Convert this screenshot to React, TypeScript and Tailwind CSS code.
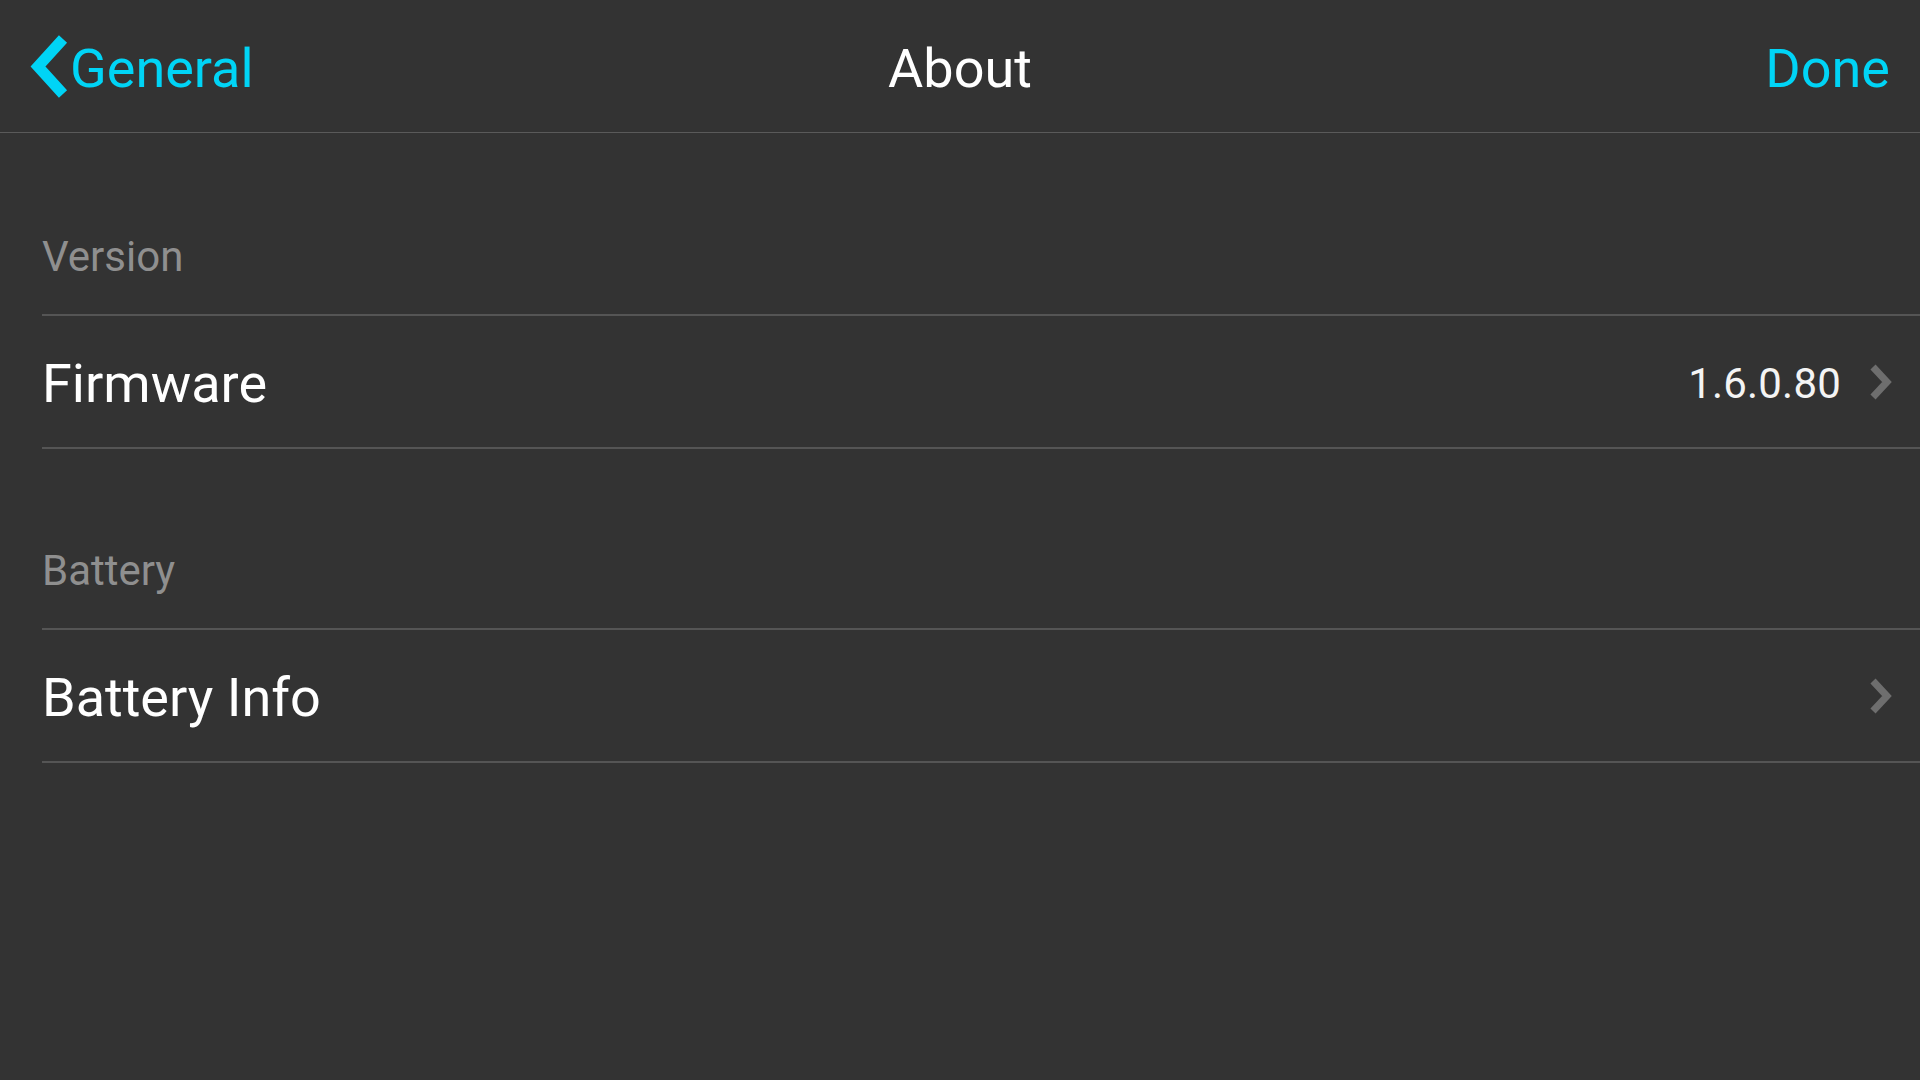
import React from 'react';

const CYAN = 'text-[#00d4f6]';

const BackChevron: React.FC = () => (
  <svg width="38" height="63" viewBox="0 0 38 63" className="overflow-visible shrink-0">
    <polyline points="33,4 8,31.5 33,59" fill="none" stroke="#00d4f6" strokeWidth="11" strokeLinejoin="miter" strokeMiterlimit="10" />
  </svg>
);

const RowChevron: React.FC = () => (
  <svg width="24" height="38" viewBox="0 0 24 38" className="overflow-visible shrink-0">
    <polyline points="4,4 18,19 4,34" fill="none" stroke="#6e6e6e" strokeWidth="7" strokeLinejoin="miter" strokeMiterlimit="10" />
  </svg>
);

interface SectionProps {
  title: string;
  height: string;
}

const SectionHeader: React.FC<SectionProps> = ({ title, height }) => (
  <div className={`ml-[42px] flex items-end border-b-2 border-[#555555] pb-[36px] ${height}`}>
    <span className="text-[42px] leading-none text-[#8f8f8f]">{title}</span>
  </div>
);

interface RowProps {
  label: string;
  value?: string;
}

const Row: React.FC<RowProps> = ({ label, value }) => (
  <div className="ml-[42px] flex h-[133px] items-center justify-between border-b-2 border-[#555555] pr-[27px]">
    <span className="mt-[5px] text-[54px] leading-none text-white">{label}</span>
    <div className="flex items-center gap-[28px]">
      {value && <span className="mt-[4px] text-[42px] leading-none tracking-[0.2px] text-[#f4f4f4]">{value}</span>}
      <RowChevron />
    </div>
  </div>
);

const App: React.FC = () => {
  return (
    <div className="min-h-screen w-full bg-[#333333] font-['Roboto',sans-serif]">
      <header className="grid h-[133px] grid-cols-3 items-center border-b border-[#5a5a5a]">
        <button className="flex items-center gap-[2px] pl-[30px]">
          <BackChevron />
          <span className={`mt-[6px] text-[54px] leading-none ${CYAN}`}>General</span>
        </button>
        <h1 className="mt-[6px] text-center text-[54px] font-normal leading-none text-white">About</h1>
        <div className="flex justify-end pr-[30px]">
          <button className={`mt-[6px] text-[54px] leading-none ${CYAN}`}>Done</button>
        </div>
      </header>

      <SectionHeader title="Version" height="h-[183px]" />
      <Row label="Firmware" value="1.6.0.80" />

      <SectionHeader title="Battery" height="h-[181px]" />
      <Row label="Battery Info" />
    </div>
  );
};

export default App;
